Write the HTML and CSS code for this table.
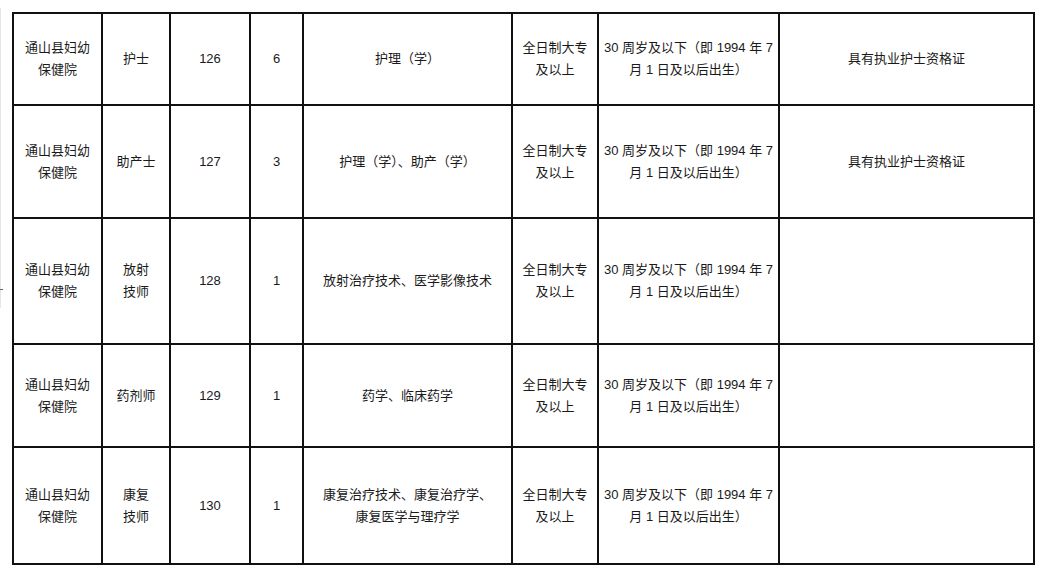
FILE: index.html
```html
<!DOCTYPE html>
<html lang="zh">
<head>
<meta charset="utf-8">
<link rel="stylesheet" href="styles.css">
</head>
<body>
<div class="page">
  <span class="edge"></span>
  <span class="tick"></span>
  <table class="grid">
    <colgroup>
      <col class="c1"><col class="c2"><col class="c3"><col class="c4">
      <col class="c5"><col class="c6"><col class="c7"><col class="c8">
    </colgroup>
    <tr class="r1">
      <td>通山县妇幼<br>保健院</td>
      <td>护士</td>
      <td>126</td>
      <td>6</td>
      <td>护理（学）</td>
      <td>全日制大专<br>及以上</td>
      <td>30 周岁及以下（即 1994 年 7<br>月 1 日及以后出生）</td>
      <td>具有执业护士资格证</td>
    </tr>
    <tr class="r2">
      <td>通山县妇幼<br>保健院</td>
      <td>助产士</td>
      <td>127</td>
      <td>3</td>
      <td>护理（学）、助产（学）</td>
      <td>全日制大专<br>及以上</td>
      <td>30 周岁及以下（即 1994 年 7<br>月 1 日及以后出生）</td>
      <td>具有执业护士资格证</td>
    </tr>
    <tr class="r3">
      <td>通山县妇幼<br>保健院</td>
      <td>放射<br>技师</td>
      <td>128</td>
      <td>1</td>
      <td>放射治疗技术、医学影像技术</td>
      <td>全日制大专<br>及以上</td>
      <td>30 周岁及以下（即 1994 年 7<br>月 1 日及以后出生）</td>
      <td></td>
    </tr>
    <tr class="r4">
      <td>通山县妇幼<br>保健院</td>
      <td>药剂师</td>
      <td>129</td>
      <td>1</td>
      <td>药学、临床药学</td>
      <td>全日制大专<br>及以上</td>
      <td>30 周岁及以下（即 1994 年 7<br>月 1 日及以后出生）</td>
      <td></td>
    </tr>
    <tr class="r5">
      <td>通山县妇幼<br>保健院</td>
      <td>康复<br>技师</td>
      <td>130</td>
      <td>1</td>
      <td>康复治疗技术、康复治疗学、<br>康复医学与理疗学</td>
      <td>全日制大专<br>及以上</td>
      <td>30 周岁及以下（即 1994 年 7<br>月 1 日及以后出生）</td>
      <td></td>
    </tr>
  </table>
</div>
</body>
</html>
```

FILE: styles.css
```css
html, body {
  margin: 0;
  padding: 0;
  background: #ffffff;
}

.page {
  position: relative;
  width: 1045px;
  height: 577px;
  padding: 12px 0 0 12px;
  box-sizing: border-box;
  font-family: "Liberation Sans", "Noto Sans CJK SC", sans-serif;
  font-size: 13px;
  color: #1a1a1a;
}

.edge {
  position: absolute;
  left: 0;
  top: 8px;
  width: 1px;
  height: 300px;
  background: #e6e6e6;
}

.tick {
  position: absolute;
  left: 0;
  top: 289px;
  width: 3px;
  height: 1px;
  background: #666;
}

.grid {
  border-collapse: collapse;
  table-layout: fixed;
  width: 1023px;
}

.grid td {
  border: 2px solid #111;
  text-align: center;
  vertical-align: middle;
  line-height: 22px;
  padding: 0;
  white-space: nowrap;
}

.c1 { width: 89px; }
.c2 { width: 68px; }
.c3 { width: 80px; }
.c4 { width: 53px; }
.c5 { width: 209px; }
.c6 { width: 86px; }
.c7 { width: 181px; }
.c8 { width: 255px; }

.r1 { height: 92px; }
.r2 { height: 113px; }
.r3 { height: 126px; }
.r4 { height: 103px; }
.r5 { height: 117px; }
```
